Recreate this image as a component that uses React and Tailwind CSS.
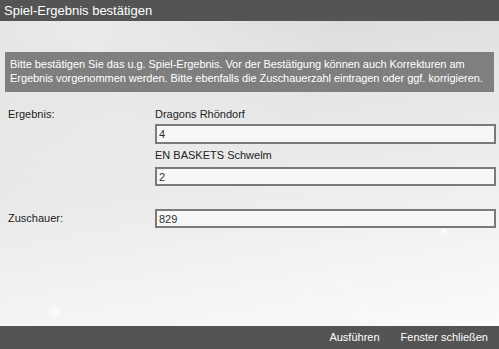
export default function App() {
    return (
        <div className="w-[499px] h-[349px] flex flex-col overflow-hidden font-['Liberation_Sans',Arial,sans-serif] text-[11px] text-[#222]">
            <div className="h-[21px] bg-[#535453] text-white text-[13px] leading-[21px] pl-[4px]">
                Spiel-Ergebnis bestätigen
            </div>
            <div className="relative flex-1 flex flex-col bg-[linear-gradient(170deg,#d6d6d6_0%,#e6e6e6_35%,#eeeeee_60%,#fbfbfb_100%)]">
                <div className="pointer-events-none absolute inset-0 bg-[radial-gradient(ellipse_at_15%_-10%,rgba(255,255,255,0.55)_0%,rgba(255,255,255,0)_45%),radial-gradient(circle_at_333px_293px,rgba(255,255,255,0)_30px,rgba(255,255,255,0.4)_31px,rgba(255,255,255,0)_33px),radial-gradient(circle_at_444px_210px,rgba(255,255,255,0.9)_0px,rgba(255,255,255,0)_5px),radial-gradient(circle_at_54px_291px,rgba(255,255,255,0.5)_5px,rgba(255,255,255,0)_7px)]" />
                <div className="relative mt-[31px] mx-[5px] h-[40px] bg-[#7f7f7f] text-white px-[5px] pt-[5px] leading-[14px] tracking-[-0.05px]">
                    Bitte bestätigen Sie das u.g. Spiel-Ergebnis. Vor der Bestätigung können auch Korrekturen am Ergebnis vorgenommen werden. Bitte ebenfalls die Zuschauerzahl eintragen oder ggf. korrigieren.
                </div>
                <div className="relative flex mt-[14px]">
                    <div className="w-[155px] pl-[8px] leading-[16px]">Ergebnis:</div>
                    <div className="flex-1 flex flex-col pr-[3px]">
                        <div className="h-[18px] leading-[16px]">Dragons Rhöndorf</div>
                        <input
                            className="h-[20px] border-2 border-[#7a7a7a] bg-[#f7f7f7] px-[2px] text-[11px] text-[#333] outline-none"
                            defaultValue="4"
                        />
                        <div className="h-[23px] leading-[23px]">EN BASKETS Schwelm</div>
                        <input
                            className="h-[19px] border-2 border-[#7a7a7a] bg-[#f7f7f7] px-[2px] text-[11px] text-[#333] outline-none"
                            defaultValue="2"
                        />
                    </div>
                </div>
                <div className="relative flex mt-[23px] items-center">
                    <div className="w-[155px] pl-[8px]">Zuschauer:</div>
                    <input
                        className="flex-1 mr-[3px] h-[19px] border-2 border-[#7a7a7a] bg-[#f7f7f7] px-[2px] text-[11px] text-[#333] outline-none"
                        defaultValue="829"
                    />
                </div>
            </div>
            <div className="h-[23px] bg-[#535453] text-white text-[11px] flex items-center justify-end gap-[21px] pr-[11px]">
                <span>Ausführen</span>
                <span>Fenster schließen</span>
            </div>
        </div>
    );
}
